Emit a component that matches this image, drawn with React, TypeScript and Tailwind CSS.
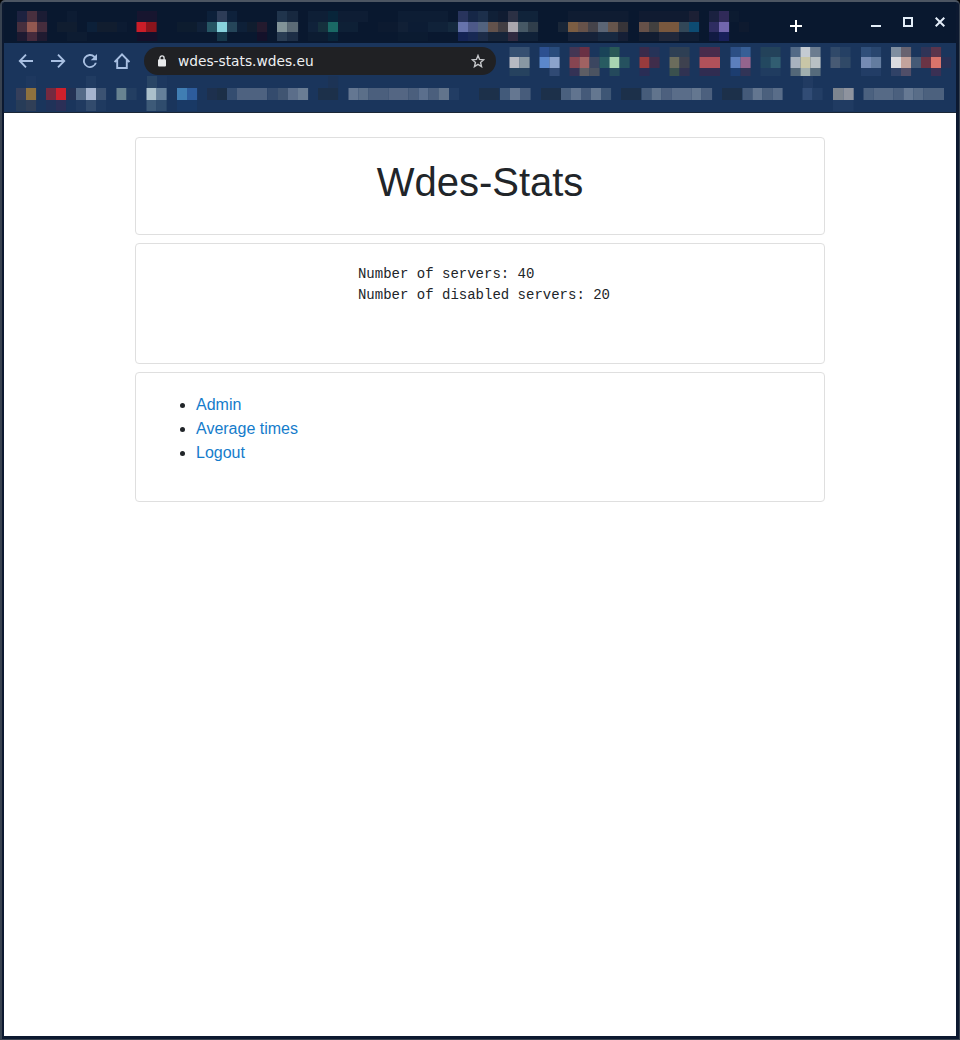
import React from "react";

type Cell = [number, number, number, string];
type Row = { y: number; h: number; cells: Cell[] };

/* Each cell: x, number of blocks, width of a block, colour */
const tabRows: Row[] = [
  { y: 11, h: 11, cells: [
    [17, 1, 10, "#1d2240"], [27, 1, 10, "#482f3e"], [37, 1, 10, "#1b1c34"], [67, 1, 10, "#0d1c33"], [137, 2, 10, "#17152f"], [207, 1, 10, "#0c203a"], [217, 1, 10, "#2d3c57"], [227, 1, 10, "#0e213b"],
    [277, 1, 10.5, "#20344c"], [287.5, 1, 10.5, "#17283f"], [308, 2, 10, "#0e1f36"], [328, 1, 10, "#08253a"], [338, 3, 10, "#0e1d34"], [398, 5, 10, "#0d1d34"],
    [458, 1, 10, "#28345d"], [468, 1, 10, "#162747"], [478, 1, 10, "#1c2f4b"], [488, 1, 10, "#102037"], [498, 1, 10, "#101c32"], [508, 1, 10, "#2b3044"], [518, 2, 10, "#10233a"],
    [568, 6, 10.1, "#0f1c32"], [639, 5, 10, "#101b31"], [689, 1, 10, "#1c2035"], [709, 1, 10, "#1a2140"], [719, 1, 10, "#302a59"], [729, 1, 10, "#0c1b31"] ] },
  { y: 22, h: 10, cells: [
    [17, 1, 10, "#462f3e"], [27, 1, 10, "#925850"], [37, 1, 10, "#462d3d"], [57, 2, 10, "#101d30"], [87, 1, 10, "#0c2039"], [97, 2, 10, "#111d2f"], [117, 1, 10, "#0c1b32"], [136.5, 1, 10, "#cb1d28"], [146.5, 1, 10, "#8b141c"], [177, 2, 10, "#0d1c2f"], [197, 1, 10, "#102139"],
    [207, 1, 10, "#265564"], [217, 1, 10, "#88d2dc"], [227, 1, 10, "#254559"], [237, 1, 10, "#0e2038"], [247, 1, 10, "#101d2f"], [257, 1, 10, "#241a2e"], [277, 1, 10.5, "#819398"], [287.5, 1, 10.5, "#5c6b76"], [308, 1, 10, "#10223a"], [318, 1, 10, "#15303d"], [328, 1, 10, "#1a6965"], [338, 2, 10, "#0e2036"],
    [378, 2, 10, "#0c1a30"], [398, 1, 10, "#112036"], [408, 2, 10, "#0c1c34"], [428, 2, 10, "#102239"], [448, 1, 10, "#14293e"], [458, 1, 10, "#6673ab"], [468, 1, 10, "#4d5988"], [478, 1, 10, "#52637f"], [488, 1, 10, "#62524c"], [498, 1, 10, "#423e43"], [508, 1, 10, "#aaa7ae"], [518, 1, 10, "#465865"], [528, 1, 10, "#303e4b"],
    [558, 1, 10, "#192638"], [568, 1, 10, "#7b5d43"], [578, 1, 10, "#66524a"], [588, 1, 10, "#45434a"], [598, 1, 10, "#5b6575"], [608, 1, 10, "#66554c"], [618, 1, 10, "#373438"], [639, 1, 10, "#665149"], [649, 1, 10, "#42403f"], [659, 2, 10, "#79583e"], [679, 1, 10, "#324758"], [689, 1, 10, "#0d4b72"], [709, 1, 10, "#2e2d61"], [719, 1, 10, "#7266ad"], [739, 1, 10, "#0e1a2f"] ] },
  { y: 32, h: 9, cells: [
    [17, 1, 10, "#1d1a31"], [27, 1, 10, "#452a3c"], [37, 1, 10, "#201b31"], [67, 2, 10, "#0d1c32"], [137, 2, 10, "#14102a"], [217, 1, 10, "#16374a"], [257, 1, 10, "#14112a"], [277, 1, 10.5, "#293c53"], [287.5, 1, 10.5, "#1d2e46"], [308, 2, 10, "#0c1c32"], [328, 1, 10, "#08253a"], [398, 3, 10, "#0b1b31"],
    [458, 1, 10, "#142455"], [468, 1, 10, "#182954"], [478, 1, 10, "#1c2c48"], [488, 2, 10, "#162439"], [508, 1, 10, "#302a40"], [518, 2, 10, "#102138"], [568, 3, 10, "#162239"], [598, 2, 10, "#182941"], [618, 1, 10, "#151f36"], [639, 2, 10, "#121d31"], [659, 2, 10, "#20283b"], [679, 2, 10, "#101e35"], [709, 1, 10, "#111a42"], [719, 1, 10, "#18205a"] ] },
];

const extensionRows: Row[] = [
  { y: 4, h: 10, cells: [
    [509.5, 2, 10, "#365071"], [539.5, 1, 10, "#2c5090"], [549.5, 1, 10, "#294c7c"], [569.5, 1, 10, "#433654"], [579.5, 1, 10, "#6a3044"], [599.5, 1, 10, "#194358"], [609.5, 1, 10, "#295957"], [639.5, 1, 10, "#392b4b"], [649.5, 1, 10, "#263358"], [669.5, 2, 10, "#2e3f54"], [699.5, 2, 10.2, "#492c4c"], [730.5, 1, 10, "#2c4f85"], [740.5, 1, 10, "#375f96"], [760.5, 2, 10, "#23425a"], [790.5, 1, 10, "#536a87"], [800.5, 1, 10, "#c4cbd2"], [810.5, 1, 10, "#6b7c90"], [830.5, 1, 10, "#304969"], [840.5, 1, 10, "#254064"], [861, 1, 10, "#304f7a"], [871, 1, 10, "#29466e"], [891, 1, 10, "#7f8ea0"], [901, 1, 10, "#686370"], [921, 1, 10, "#303457"], [931, 1, 10, "#5b354c"] ] },
  { y: 14, h: 11, cells: [
    [509.5, 1, 10, "#b7bac2"], [519.5, 1, 10, "#8898a3"], [539.5, 1, 10, "#5b87ca"], [549.5, 1, 10, "#8ba3cc"], [569.5, 1, 10, "#874551"], [579.5, 1, 10, "#a06262"], [589.5, 1, 10, "#3b4660"], [599.5, 1, 10, "#285b61"], [609.5, 1, 10, "#a8d4b1"], [619.5, 1, 10, "#25515f"], [639.5, 1, 10, "#993b3d"], [649.5, 1, 10, "#402d4b"], [669.5, 1, 10, "#6b6c5c"], [679.5, 1, 10, "#3e414f"], [699.5, 2, 10.2, "#b0515a"], [730.5, 1, 10, "#5c7fbd"], [740.5, 1, 10, "#94648d"], [760.5, 1, 10, "#234860"], [770.5, 1, 10, "#315d71"], [790.5, 1, 10, "#a8b2be"], [800.5, 1, 10, "#c8c6a7"], [810.5, 1, 10, "#b8c0c4"], [830.5, 1, 10, "#475a74"], [840.5, 1, 10, "#304967"], [861, 1, 10, "#758bb3"], [871, 1, 10, "#637c9f"], [891, 1, 10, "#dbdbe0"], [901, 1, 10, "#c3a39c"], [911, 1, 10, "#455a76"], [921, 1, 10, "#6a3445"], [931, 1, 10, "#d9746b"], [941, 1, 10, "#283055"] ] },
  { y: 25, h: 8, cells: [
    [509.5, 2, 10, "#26425f"], [549.5, 1, 10, "#304a74"], [569.5, 1, 10, "#343255"], [579.5, 1, 10, "#5d5d64"], [589.5, 1, 10, "#4b5361"], [609.5, 1, 10, "#24495c"], [639.5, 1, 10, "#292d55"], [669.5, 1, 10, "#3a504e"], [679.5, 1, 10, "#303252"], [699.5, 2, 10.2, "#302c51"], [730.5, 1, 10, "#1c3d70"], [740.5, 1, 10, "#313457"], [760.5, 2, 10, "#203c60"], [790.5, 1, 10, "#536778"], [800.5, 1, 10, "#a0aeae"], [810.5, 1, 10, "#566b7c"], [861, 2, 10, "#223d66"], [891, 1, 10, "#304267"], [901, 1, 10, "#504e68"], [931, 1, 10, "#3a3054"] ] },
];

const bookmarkRows: Row[] = [
  { y: 0, h: 12, cells: [[26, 1, 10, "#1e385f"], [86, 1, 10, "#213c62"], [147, 1, 10, "#294565"], [157, 1, 10, "#1d385f"], [328, 1, 10, "#1c3355"], [803, 1, 10, "#213b62"]] },
  { y: 12, h: 12, cells: [
    [16, 1, 10, "#353f5b"], [26, 1, 10, "#8f713e"], [46, 1, 10, "#742a40"], [56, 1, 10, "#ce202b"], [66, 1, 10, "#243254"], [76, 1, 10, "#556b88"], [86, 1, 10, "#a5b4ce"], [96, 1, 10, "#3b5272"], [116.5, 1, 10, "#688391"], [126.5, 1, 10, "#233e62"], [146.5, 1, 10, "#abc0cb"], [156.5, 1, 10, "#65809a"], [177, 1, 10, "#407eb3"], [187, 1, 10, "#2d5c9c"],
    [207, 1, 10, "#1d304e"], [217, 1, 10, "#1c2f47"], [227, 1, 10, "#344d70"], [237, 3, 10.1, "#4e6280"], [268, 1, 10, "#344b6d"], [278, 1, 10, "#405572"], [288, 1, 10, "#5b6e8a"], [298, 1, 10, "#6a7d94"], [318, 2, 10, "#1c304a"],
    [348.5, 1, 10, "#647792"], [358.5, 1, 10, "#5b6f89"], [368.5, 2, 10, "#4b5f7d"], [388.5, 2, 10, "#546683"], [408.5, 1, 10, "#4b5f7d"], [418.5, 1, 10, "#5b6f8d"], [428.5, 1, 10, "#4b5f7d"], [438.5, 1, 10.5, "#62748c"], [449, 1, 10, "#223d64"],
    [479, 2, 10, "#1c304a"], [500, 1, 10, "#425a7a"], [510, 1, 10, "#657791"], [520, 1, 10.5, "#475c7b"], [541, 2, 10, "#1c304a"], [561, 1, 10, "#4a607e"], [571, 1, 10, "#61748f"], [581, 1, 10, "#455a79"], [591, 1, 10, "#647790"], [601, 1, 10, "#3e5675"],
    [621, 2, 10, "#1c304a"], [641.5, 1, 10, "#465c7a"], [651.5, 1, 10, "#61748d"], [661.5, 1, 10, "#4d607e"], [671.5, 2, 10, "#5a6d89"], [691.5, 1, 10, "#647790"], [701.5, 1, 10.5, "#4c607e"], [722, 2, 10, "#1c304a"], [742.5, 1, 10, "#445a79"], [752.5, 1, 10, "#637690"], [762.5, 1, 10, "#4b607d"], [772.5, 1, 10, "#596d89"], [802.5, 1, 10, "#314c75"], [812.5, 1, 10, "#233e65"],
    [833, 1, 10.3, "#7d858f"], [843.3, 1, 10.3, "#8e939e"], [863.5, 1, 10, "#4b617f"], [873.5, 2, 10, "#566a86"], [893.5, 1, 10, "#4b607e"], [903.5, 1, 10, "#667993"], [913.5, 1, 10, "#596d88"], [923.5, 2, 10.2, "#4c617e"] ] },
  { y: 24, h: 11, cells: [[16, 1, 10, "#273c58"], [26, 1, 10, "#303f57"], [46, 1, 10, "#203259"], [56, 1, 10, "#2b2f57"], [76, 1, 10, "#203a60"], [86, 1, 10, "#324b6d"], [96, 1, 10, "#1f3a60"], [146.5, 1, 10, "#3d5a78"], [156.5, 1, 10, "#2f4c6d"], [177, 2, 10, "#193965"], [833, 2, 10.3, "#203b62"]] },
];

function Mosaic({ rows, start, width, height }: { rows: Row[]; start: number; width: number; height: number }) {
  return (
    <svg width={width} height={height} viewBox={`${start} 0 ${width} ${height}`} className="block shrink-0" aria-hidden="true">
      {rows.map((row) =>
        row.cells.map(([x, count, size, color]) => (
          <rect key={`${row.y}-${x}`} x={x} y={row.y} width={count * size + 0.1} height={row.h} fill={color} />
        )),
      )}
    </svg>
  );
}

function NavIcon({ d, fill = false }: { d: string; fill?: boolean }) {
  return (
    <svg width="16" height="16" viewBox="0 0 16 16" className="shrink-0" fill={fill ? "#a9c0e2" : "none"} stroke={fill ? "none" : "#a9c0e2"} strokeWidth="1.9">
      <path d={d} />
    </svg>
  );
}

function TitleBar() {
  return (
    <header className="flex h-[41px] bg-[#09182f] pl-[13px]">
      <div className="-mt-[2px] w-[773px]">
        <Mosaic rows={tabRows} start={17} width={733} height={41} />
      </div>
      <button aria-label="New tab" className="mt-[18px] h-3 w-3">
        <svg width="12" height="12" stroke="#fff" strokeWidth="2"><path d="M6 0v12M0 6h12" /></svg>
      </button>
      <div className="mt-[15px] ml-[69px] flex gap-[22px]">
        <svg width="10" height="10" fill="#e3edf8"><path d="M0 8h10v2H0z" /></svg>
        <svg width="10" height="10" fill="none" stroke="#e3edf8" strokeWidth="2"><path d="M1 1h8v8H1z" /></svg>
        <svg width="10" height="10" fill="none" stroke="#e3edf8" strokeWidth="2"><path d="M.7.7l8.6 8.6M9.3.7L.7 9.3" /></svg>
      </div>
    </header>
  );
}

function Toolbar() {
  return (
    <div className="flex h-[33px] items-start">
      <nav className="mt-[10px] ml-[14px] flex gap-4">
        <NavIcon d="M15 8H2M8 1.7L1.8 8L8 14.3" />
        <NavIcon d="M1 8h13M8 1.7L14.2 8L8 14.3" />
        <NavIcon fill d="M12.95 3.05A7 7 0 1 0 14.76 9.75h-1.9A5.15 5.15 0 1 1 11.6 4.4L8.7 7.25H15V1z" />
        <NavIcon d="M.6 9L8 1.4L15.4 9M3.2 7v8h9.6V7" />
      </nav>
      <div className="mt-1 ml-[14px] flex h-7 w-[352px] items-center rounded-full bg-[#202124] pr-[11px] pl-[14px]">
        <svg width="8" height="12" viewBox="0 0 8 12" className="shrink-0">
          <rect y="4.2" width="8" height="7.3" rx="1" fill="#e8eaed" />
          <path d="M1.9 5V3a2.1 2.1 0 0 1 4.2 0v2" fill="none" stroke="#e8eaed" strokeWidth="1.3" />
        </svg>
        <span className="ml-[12px] flex-1 font-['DejaVu_Sans',sans-serif] text-[13.75px] leading-7 text-[#eef0f2]">wdes-stats.wdes.eu</span>
        <svg width="14" height="14" viewBox="0 0 14 14" fill="none" stroke="#c5c7ca" strokeWidth="1.4" className="shrink-0">
          <path d="M7 1.5l1.55 3.9 4.2.35-3.2 2.7.98 4.15L7 10.35 3.47 12.6l.98-4.15-3.2-2.7 4.2-.35z" />
        </svg>
      </div>
      <div className="ml-[8px]">
        <Mosaic rows={extensionRows} start={504} width={450} height={33} />
      </div>
    </div>
  );
}

function Card({ className, children }: { className: string; children: React.ReactNode }) {
  return <section className={`rounded-[4px] border border-[#dfdfdf] bg-white ${className}`}>{children}</section>;
}

export default function App() {
  return (
    <div className="h-[1040px] w-[960px] bg-black">
      <div className="flex h-[1040px] flex-col rounded-t-[5px] border-t-2 border-r border-b border-l-2 border-t-[#4c5562] border-r-[#384250] border-b-[#384250] border-l-[#384250] bg-[#0c1930] pr-[3px] pb-[3px] pl-[2px]">
        <TitleBar />
        <div className="h-[70px] border-b border-[#1b2736] bg-[#1a355c]">
          <Toolbar />
          <Mosaic rows={bookmarkRows} start={4} width={952} height={35} />
        </div>
        <main className="flex-1 bg-white px-[131px] pt-6 font-['Liberation_Sans',Arial,sans-serif] text-base text-[#212529]">
          <div className="flex flex-col gap-2">
            <Card className="h-[98px] pt-5 text-center">
              <h1 className="text-[40px] leading-[48px]">Wdes-Stats</h1>
            </Card>
            <Card className="flex h-[121px] justify-center pt-5 pl-2">
              <pre className="font-['Liberation_Mono',monospace] text-[14px] leading-[21px]">{`Number of servers: 40
Number of disabled servers: 20`}</pre>
            </Card>
            <Card className="h-[130px] pt-5 pl-[60px]">
              <ul className="list-disc leading-6">
                <li><a href="#admin" className="text-[#157ccb]">Admin</a></li>
                <li><a href="#times" className="text-[#157ccb]">Average times</a></li>
                <li><a href="#logout" className="text-[#157ccb]">Logout</a></li>
              </ul>
            </Card>
          </div>
        </main>
      </div>
    </div>
  );
}
